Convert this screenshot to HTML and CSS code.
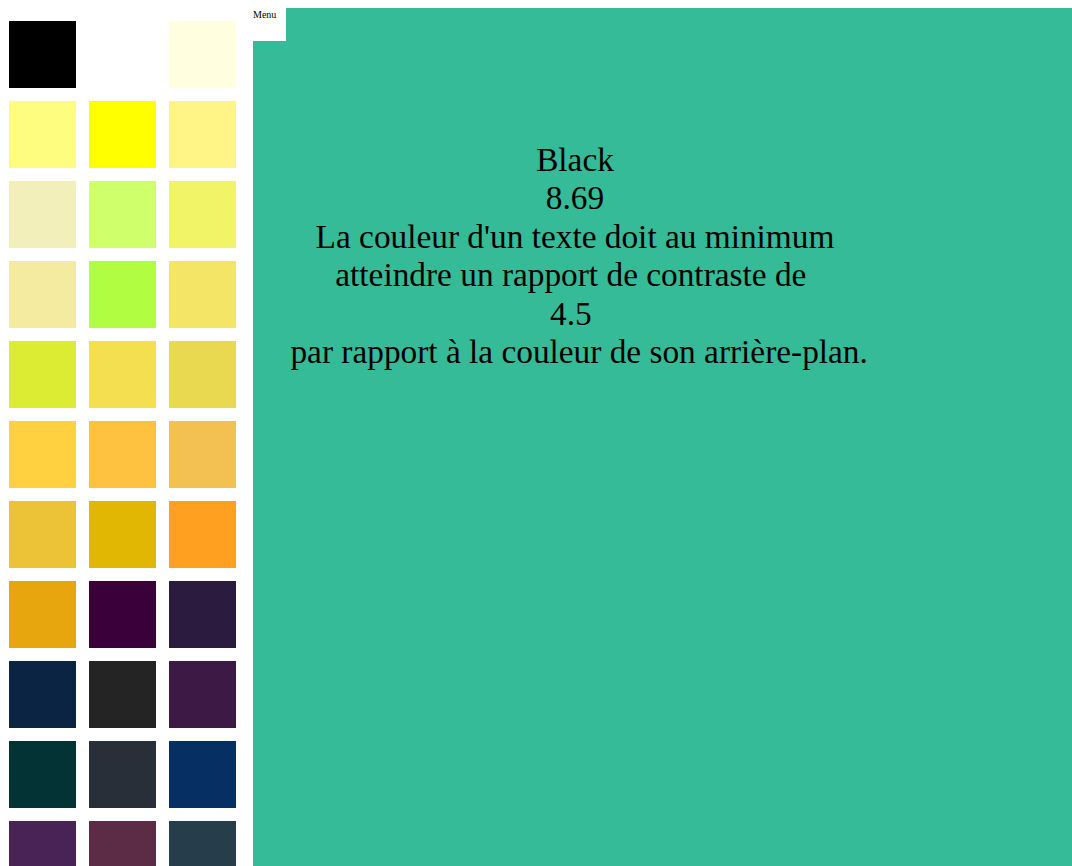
FILE: index.html
```html
<!DOCTYPE html>
<html lang="fr">
<head>
<meta charset="utf-8">
<title>Contraste</title>
<link rel="stylesheet" href="styles.css">
</head>
<body>
<div class="page">
  <aside class="palette">
    <div class="swatch" style="background:#000000"></div>
    <div class="swatch" style="background:#ffffff"></div>
    <div class="swatch" style="background:#ffffe0"></div>
    <div class="swatch" style="background:#fffd80"></div>
    <div class="swatch" style="background:#ffff00"></div>
    <div class="swatch" style="background:#fff587"></div>
    <div class="swatch" style="background:#f3efbb"></div>
    <div class="swatch" style="background:#cfff6a"></div>
    <div class="swatch" style="background:#f0f466"></div>
    <div class="swatch" style="background:#f4eaa0"></div>
    <div class="swatch" style="background:#b0fd42"></div>
    <div class="swatch" style="background:#f4e566"></div>
    <div class="swatch" style="background:#dbec33"></div>
    <div class="swatch" style="background:#f3df50"></div>
    <div class="swatch" style="background:#e9d950"></div>
    <div class="swatch" style="background:#ffd140"></div>
    <div class="swatch" style="background:#ffc240"></div>
    <div class="swatch" style="background:#f3c152"></div>
    <div class="swatch" style="background:#ecc236"></div>
    <div class="swatch" style="background:#e2b704"></div>
    <div class="swatch" style="background:#ffa020"></div>
    <div class="swatch" style="background:#e8a60e"></div>
    <div class="swatch" style="background:#3a0039"></div>
    <div class="swatch" style="background:#2b1c3f"></div>
    <div class="swatch" style="background:#0b2444"></div>
    <div class="swatch" style="background:#242424"></div>
    <div class="swatch" style="background:#3d1945"></div>
    <div class="swatch" style="background:#043335"></div>
    <div class="swatch" style="background:#292f38"></div>
    <div class="swatch" style="background:#063063"></div>
    <div class="swatch" style="background:#492356"></div>
    <div class="swatch" style="background:#5c2b45"></div>
    <div class="swatch" style="background:#263d4c"></div>
  </aside>
  <main class="preview">
    <div class="menu">Menu</div>
    <div class="message">
      <div>Black</div>
      <div>8.69</div>
      <div>La couleur d'un texte doit au minimum atteindre un rapport de contraste de&nbsp;</div>
      <div>4.5&nbsp;</div>
      <div>&nbsp;par rapport à la couleur de son arrière-plan.</div>
    </div>
  </main>
</div>
</body>
</html>
```

FILE: styles.css
```css
html, body {
  margin: 0;
  padding: 0;
  background: #ffffff;
}

body {
  margin: 8px 0 0 8px;
  font-family: "Liberation Serif", "Times New Roman", serif;
  color: #000000;
}

.page {
  display: flex;
  align-items: flex-start;
}

.palette {
  flex: none;
  width: 244px;
  padding: 13px 0 0 1px;
  display: grid;
  grid-template-columns: repeat(3, 67px);
  grid-auto-rows: 67px;
  gap: 13px;
}

.swatch {
  width: 67px;
  height: 67px;
}

.preview {
  flex: 1 1 auto;
  position: relative;
  height: 900px;
  background: #35bb97;
}

.menu {
  position: absolute;
  top: 0;
  left: 0;
  width: 33px;
  height: 33px;
  background: #ffffff;
  font-size: 10px;
  line-height: 12px;
  padding-top: 1px;
  box-sizing: border-box;
}

.message {
  width: 596px;
  margin: 133px 0 0 24px;
  text-align: center;
  font-size: 33.33px;
  line-height: 38.4px;
  color: #000000;
}
```
